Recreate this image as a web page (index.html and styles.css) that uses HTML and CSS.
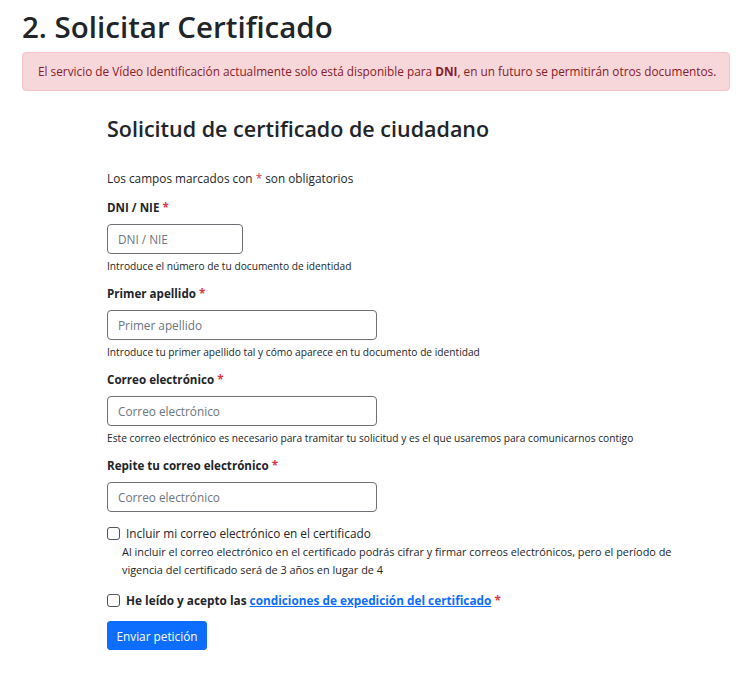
FILE: index.html
```html
<!DOCTYPE html>
<html lang="es">
<head>
<meta charset="utf-8">
<title>2. Solicitar Certificado</title>
<link rel="stylesheet" href="styles.css">
</head>
<body>
<main class="page">
  <h1 class="title">2. Solicitar Certificado</h1>
  <div class="alert">El servicio de Vídeo Identificación actualmente solo está disponible para <strong>DNI</strong>, en un futuro se permitirán otros documentos.</div>

  <form class="form">
    <h2 class="subtitle">Solicitud de certificado de ciudadano</h2>
    <p class="intro">Los campos marcados con <span class="req">*</span> son obligatorios</p>

    <div class="group">
      <label class="label" for="dni">DNI / NIE <span class="req">*</span></label>
      <input class="input input-short" id="dni" type="text" placeholder="DNI / NIE">
      <div class="help">Introduce el número de tu documento de identidad</div>
    </div>

    <div class="group">
      <label class="label" for="ap">Primer apellido <span class="req">*</span></label>
      <input class="input" id="ap" type="text" placeholder="Primer apellido">
      <div class="help">Introduce tu primer apellido tal y cómo aparece en tu documento de identidad</div>
    </div>

    <div class="group">
      <label class="label" for="mail">Correo electrónico <span class="req">*</span></label>
      <input class="input" id="mail" type="email" placeholder="Correo electrónico">
      <div class="help">Este correo electrónico es necesario para tramitar tu solicitud y es el que usaremos para comunicarnos contigo</div>
    </div>

    <div class="group group-last">
      <label class="label" for="mail2">Repite tu correo electrónico <span class="req">*</span></label>
      <input class="input" id="mail2" type="email" placeholder="Correo electrónico">
    </div>

    <div class="check">
      <input class="box" type="checkbox" id="inc">
      <label class="check-label" for="inc">Incluir mi correo electrónico en el certificado</label>
    </div>
    <div class="check-help">Al incluir el correo electrónico en el certificado podrás cifrar y firmar correos electrónicos, pero el período de<br>vigencia del certificado será de 3 años en lugar de 4</div>

    <div class="check check-terms">
      <input class="box" type="checkbox" id="terms">
      <label class="check-label bold" for="terms">He leído y acepto las <a class="link" href="#">condiciones de expedición del certificado</a> <span class="req">*</span></label>
    </div>

    <button class="btn" type="button">Enviar petición</button>
  </form>
</main>
</body>
</html>
```

FILE: styles.css
```css
* { box-sizing: border-box; }

html, body {
  margin: 0;
  padding: 0;
  background: #ffffff;
}

body {
  font-family: "Open Sans", "Noto Sans", "DejaVu Sans", sans-serif;
  color: #212529;
}

.page {
  padding: 0 24px 0 22px;
}

.title {
  margin: 9px 0 7px;
  font-size: 29.5px;
  line-height: 36px;
  font-weight: 600;
  color: #212529;
}

.alert {
  height: 39px;
  padding: 0 15px;
  line-height: 37px;
  background: #f8d7da;
  border: 1px solid #f5c2c7;
  border-radius: 4px;
  color: #842029;
  font-size: 11.8px;
  white-space: nowrap;
}

.alert strong { font-weight: 700; }

.form {
  margin-left: 85px;
  display: flex;
  flex-direction: column;
  align-items: flex-start;
}

.subtitle {
  margin: 25px 0 0;
  font-size: 21.5px;
  line-height: 26px;
  font-weight: 600;
  color: #212529;
}

.intro {
  margin: 28px 0 0;
  font-size: 11.8px;
  line-height: 16px;
}

.req { color: #dc3545; }

.group {
  margin-top: 14px;
  display: flex;
  flex-direction: column;
  align-items: flex-start;
}

.group + .group { margin-top: 12px; }

.label {
  font-size: 11.6px;
  line-height: 16px;
  font-weight: 700;
  margin-bottom: 8px;
}

.input {
  width: 270px;
  height: 30px;
  padding: 0 10px;
  border: 1px solid #6c6f73;
  border-radius: 4px;
  font-family: inherit;
  font-size: 11.8px;
  color: #212529;
  background: #fff;
}

.input-short { width: 136px; }

.input::placeholder { color: #6c757d; opacity: 1; }

.help {
  margin-top: 4px;
  font-size: 10.2px;
  line-height: 16px;
  color: #212529;
  white-space: nowrap;
}

.check {
  margin-top: 13px;
  display: flex;
  align-items: center;
  gap: 6px;
  height: 16px;
}

.box {
  appearance: none;
  -webkit-appearance: none;
  margin: 0;
  width: 13px;
  height: 13px;
  border: 1px solid #505357;
  border-radius: 3px;
  background: #fff;
}

.check-label {
  font-size: 11.8px;
  line-height: 16px;
  color: #212529;
}

.bold { font-weight: 700; }

.link {
  color: #0d6efd;
  text-decoration: underline;
}

.check-help {
  margin: 2px 0 0 15px;
  font-size: 10.9px;
  line-height: 18px;
  white-space: nowrap;
}

.check-terms { margin-top: 13px; }

.btn {
  margin-top: 13px;
  width: 100px;
  height: 29px;
  padding: 0;
  border: 1px solid #0d6efd;
  border-radius: 3px;
  background: #0d6efd;
  color: #ffffff;
  font-family: inherit;
  font-size: 11.8px;
}
```
